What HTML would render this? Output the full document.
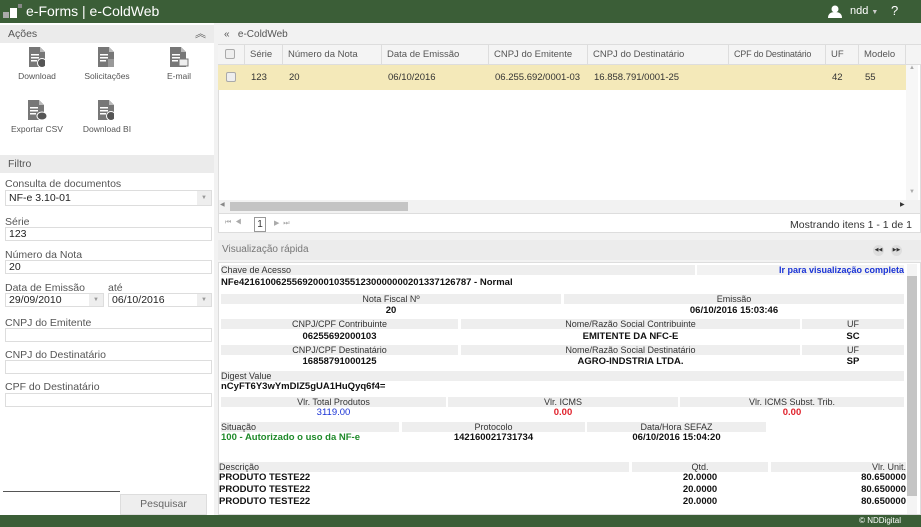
<!DOCTYPE html>
<html><head><meta charset="utf-8"><style>
*{box-sizing:border-box;margin:0;padding:0}
body{width:921px;height:527px;overflow:hidden;background:#f2f2f2;font-family:"Liberation Sans",sans-serif;font-size:10px;color:#333;position:relative}
.a{position:absolute}
.hdr{left:0;top:0;width:921px;height:23px;background:#3b5e37;color:#fff}
.ftr{left:0;top:515px;width:921px;height:12px;background:#3b5e37;color:#fff;font-size:8px}
.ph{background:#ebebeb;color:#555;font-size:10.5px;padding-left:8px;line-height:18px}
.lbl{font-size:10.5px;color:#555}
.inp{background:#fff;border:1px solid #ddd;height:14px;font-size:10.5px;color:#222;padding-left:3px;line-height:13px}
.dd{position:absolute;right:0;top:0;width:14px;height:100%;background:#eee;color:#999;font-size:6px;text-align:center;line-height:13px}
.ico{width:16px;height:20px}
.il{font-size:8.5px;color:#555;text-align:center;width:60px}
.gh{top:44px;height:21px;line-height:21px;border-right:1px solid #ddd;padding-left:5px;font-size:9.5px;color:#555;white-space:nowrap;overflow:hidden}
.gr{top:65px;height:25px;line-height:25px;padding-left:6px;font-size:9.5px;color:#333}
.cb{width:10px;height:10px;border:1px solid #aaa;border-radius:2px;background:#eee}
.b{background:#eee;height:10px;font-size:9px;line-height:10px;text-align:center;color:#333}
.v{font-size:9.5px;font-weight:bold;color:#111;text-align:center;line-height:11px}
.l{text-align:left}
</style></head><body>
<div class="a hdr">
  <div class="a" style="left:3px;top:12px;width:6px;height:6px;background:#aaa"></div>
  <div class="a" style="left:10px;top:8px;width:7px;height:10px;background:#fff"></div>
  <div class="a" style="left:18px;top:4px;width:4px;height:4px;background:#888"></div>
  <div class="a" style="left:26px;top:3px;font-size:14px;line-height:17px">e-Forms | e-ColdWeb</div>
  <svg class="a" style="left:828px;top:5px" width="14" height="13"><circle cx="7" cy="4" r="3.5" fill="#fff"/><path d="M0 13 Q0 7 7 7 Q14 7 14 13Z" fill="#fff"/></svg>
  <div class="a" style="left:850px;top:5px;font-size:11px">ndd <span style="font-size:7px;color:#ccc">▼</span></div>
  <div class="a" style="left:891px;top:3px;font-size:13px">?</div>
</div>
<!-- left -->
<div class="a" style="left:0;top:23px;width:214px;height:492px;background:#fff"></div>
<div class="a ph" style="left:0;top:25px;width:214px;height:18px">Ações<span class="a" style="right:8px;top:0;font-size:11px">︽</span></div>
<svg width="0" height="0" style="position:absolute"><defs><g id="doc"><path d="M0 0h11l5 5v15H0z" fill="#777"/><path d="M11 0v5h5" fill="#bbb"/><rect x="2" y="7" width="8" height="1.5" fill="#fff"/><rect x="2" y="10" width="8" height="1.5" fill="#fff"/><rect x="2" y="13" width="6" height="1.5" fill="#fff"/></g></defs></svg>
<svg class="a ico" style="left:29px;top:47px"><use href="#doc"/><circle cx="13" cy="16" r="4.5" fill="#555" stroke="#fff"/></svg>
<div class="a il" style="left:7px;top:71px">Download</div>
<svg class="a ico" style="left:98px;top:47px"><use href="#doc"/><rect x="10" y="12" width="6" height="8" fill="#999"/></svg>
<div class="a il" style="left:77px;top:71px">Solicitações</div>
<svg class="a ico" style="left:170px;top:47px;width:20px"><use href="#doc"/><rect x="9" y="12" width="9" height="7" fill="#eee" stroke="#777"/></svg>
<div class="a il" style="left:149px;top:71px">E-mail</div>
<svg class="a ico" style="left:28px;top:100px;width:20px"><use href="#doc"/><ellipse cx="14" cy="16" rx="5" ry="4" fill="#555" stroke="#fff"/></svg>
<div class="a il" style="left:7px;top:124px">Exportar CSV</div>
<svg class="a ico" style="left:98px;top:100px"><use href="#doc"/><circle cx="13" cy="16" r="4.5" fill="#555" stroke="#fff"/></svg>
<div class="a il" style="left:77px;top:124px">Download BI</div>
<div class="a ph" style="left:0;top:155px;width:214px;height:18px">Filtro</div>
<div class="a lbl" style="left:5px;top:178px">Consulta de documentos</div>
<div class="a inp" style="left:5px;top:190px;width:207px;height:16px;line-height:15px">NF-e 3.10-01<div class="dd" style="line-height:15px">▼</div></div>
<div class="a lbl" style="left:5px;top:216px">Série</div>
<div class="a inp" style="left:5px;top:227px;width:207px">123</div>
<div class="a lbl" style="left:5px;top:249px">Número da Nota</div>
<div class="a inp" style="left:5px;top:260px;width:207px">20</div>
<div class="a lbl" style="left:5px;top:282px">Data de Emissão</div>
<div class="a lbl" style="left:108px;top:282px">até</div>
<div class="a inp" style="left:5px;top:293px;width:99px">29/09/2010<div class="dd">▼</div></div>
<div class="a inp" style="left:108px;top:293px;width:104px">06/10/2016<div class="dd">▼</div></div>
<div class="a lbl" style="left:5px;top:317px">CNPJ do Emitente</div>
<div class="a inp" style="left:5px;top:328px;width:207px"></div>
<div class="a lbl" style="left:5px;top:349px">CNPJ do Destinatário</div>
<div class="a inp" style="left:5px;top:360px;width:207px"></div>
<div class="a lbl" style="left:5px;top:381px">CPF do Destinatário</div>
<div class="a inp" style="left:5px;top:393px;width:207px"></div>
<div class="a" style="left:3px;top:491px;width:117px;height:1px;background:#555"></div>
<div class="a" style="left:120px;top:494px;width:87px;height:21px;background:#eee;border:1px solid #ddd;color:#666;font-size:10.5px;text-align:center;line-height:19px">Pesquisar</div>
<!-- grid -->
<div class="a" style="left:218px;top:25px;width:703px;height:208px;background:#fff;border:1px solid #ddd"></div>
<div class="a" style="left:218px;top:25px;width:703px;height:19px;background:#f2f2f2;font-size:10px;color:#555;line-height:19px;padding-left:6px">«&nbsp;&nbsp; e-ColdWeb</div>
<div class="a" style="left:218px;top:44px;width:703px;height:21px;background:#f4f4f4;border-top:1px solid #ddd;border-bottom:1px solid #ddd"></div>
<div class="a gh" style="left:218px;width:27px"><div class="cb" style="margin-top:5px;margin-left:2px"></div></div>
<div class="a gh" style="left:245px;width:38px">Série</div>
<div class="a gh" style="left:283px;width:99px">Número da Nota</div>
<div class="a gh" style="left:382px;width:107px">Data de Emissão</div>
<div class="a gh" style="left:489px;width:99px">CNPJ do Emitente</div>
<div class="a gh" style="left:588px;width:141px">CNPJ do Destinatário</div>
<div class="a gh" style="left:729px;width:97px;font-size:9px;letter-spacing:-0.2px">CPF do Destinatário</div>
<div class="a gh" style="left:826px;width:33px">UF</div>
<div class="a gh" style="left:859px;width:47px">Modelo</div>
<div class="a" style="left:218px;top:65px;width:688px;height:25px;background:#f4e9b9"></div>
<div class="a gr" style="left:218px"><div class="cb" style="margin-top:7px;margin-left:2px"></div></div>
<div class="a gr" style="left:245px">123</div><div class="a gr" style="left:283px">20</div>
<div class="a gr" style="left:382px">06/10/2016</div><div class="a gr" style="left:489px">06.255.692/0001-03</div>
<div class="a gr" style="left:588px">16.858.791/0001-25</div><div class="a gr" style="left:826px">42</div><div class="a gr" style="left:859px">55</div>
<div class="a" style="left:906px;top:65px;width:12px;height:135px;background:#f7f7f7;color:#aaa;font-size:6px;text-align:center">▲<div style="margin-top:118px">▼</div></div>
<div class="a" style="left:219px;top:200px;width:701px;height:13px;background:#f2f2f2"></div>
<div class="a" style="left:230px;top:202px;width:178px;height:9px;background:#c4c4c4"></div>
<div class="a" style="left:220px;top:201px;font-size:6px;color:#888">◀</div>
<div class="a" style="left:900px;top:201px;font-size:6px;color:#333">▶</div>
<div class="a" style="left:219px;top:213px;width:701px;height:1px;background:#ddd"></div>
<div class="a" style="left:225px;top:219px;font-size:7px;color:#aaa">⏮&nbsp; ◀</div>
<div class="a" style="left:254px;top:217px;width:12px;height:15px;border:1px solid #999;font-size:10px;text-align:center;line-height:13px">1</div>
<div class="a" style="left:274px;top:219px;font-size:7px;color:#aaa">▶&nbsp; ⏭</div>
<div class="a" style="left:790px;top:219px;font-size:10.5px;color:#333">Mostrando itens 1 - 1 de 1</div>
<!-- quick view -->
<div class="a" style="left:218px;top:240px;width:703px;height:20px;background:#ececec;color:#777;font-size:10px;line-height:20px;padding-left:4px">Visualização rápida</div>
<div class="a" style="left:873px;top:245px;width:11px;height:11px;border-radius:6px;background:#ddd;font-size:5px;text-align:center;line-height:11px">◀◀</div>
<div class="a" style="left:891px;top:245px;width:11px;height:11px;border-radius:6px;background:#ddd;font-size:5px;text-align:center;line-height:11px">▶▶</div>
<div class="a" style="left:218px;top:262px;width:703px;height:253px;background:#fff;border:1px solid #ddd"></div>
<div class="a" style="left:907px;top:264px;width:10px;height:250px;background:#f4f4f4"><div style="margin-top:12px;height:220px;background:#c4c4c4"></div></div>

<div class="a b l" style="left:221px;top:265px;width:474px">Chave de Acesso</div>
<div class="a b" style="left:697px;top:265px;width:207px;text-align:right;color:#1a33d6;font-weight:bold;background:#f2f2f2">Ir para visualização completa</div>
<div class="a v l" style="left:221px;top:277px">NFe42161006255692000103551230000000201337126787 - Normal</div>
<div class="a b" style="left:221px;top:294px;width:340px">Nota Fiscal Nº</div>
<div class="a b" style="left:564px;top:294px;width:340px">Emissão</div>
<div class="a v" style="left:221px;top:305px;width:340px">20</div>
<div class="a v" style="left:564px;top:305px;width:340px">06/10/2016 15:03:46</div>
<div class="a b" style="left:221px;top:319px;width:237px">CNPJ/CPF Contribuinte</div>
<div class="a b" style="left:461px;top:319px;width:339px">Nome/Razão Social Contribuinte</div>
<div class="a b" style="left:802px;top:319px;width:102px">UF</div>
<div class="a v" style="left:221px;top:331px;width:237px">06255692000103</div>
<div class="a v" style="left:461px;top:331px;width:339px">EMITENTE DA NFC-E</div>
<div class="a v" style="left:802px;top:331px;width:102px">SC</div>
<div class="a b" style="left:221px;top:345px;width:237px">CNPJ/CPF Destinatário</div>
<div class="a b" style="left:461px;top:345px;width:339px">Nome/Razão Social Destinatário</div>
<div class="a b" style="left:802px;top:345px;width:102px">UF</div>
<div class="a v" style="left:221px;top:356px;width:237px">16858791000125</div>
<div class="a v" style="left:461px;top:356px;width:339px">AGRO-INDSTRIA LTDA.</div>
<div class="a v" style="left:802px;top:356px;width:102px">SP</div>
<div class="a b l" style="left:221px;top:371px;width:683px">Digest Value</div>
<div class="a v l" style="left:221px;top:381px">nCyFT6Y3wYmDIZ5gUA1HuQyq6f4=</div>
<div class="a b" style="left:221px;top:397px;width:225px">Vlr. Total Produtos</div>
<div class="a b" style="left:448px;top:397px;width:230px">Vlr. ICMS</div>
<div class="a b" style="left:680px;top:397px;width:224px">Vlr. ICMS Subst. Trib.</div>
<div class="a v" style="left:221px;top:407px;width:225px;color:#1a33d6;font-weight:normal">3119.00</div>
<div class="a v" style="left:448px;top:407px;width:230px;color:#e0202a">0.00</div>
<div class="a v" style="left:680px;top:407px;width:224px;color:#e0202a">0.00</div>
<div class="a b l" style="left:221px;top:422px;width:178px">Situação</div>
<div class="a b" style="left:402px;top:422px;width:183px">Protocolo</div>
<div class="a b" style="left:587px;top:422px;width:179px">Data/Hora SEFAZ</div>
<div class="a v l" style="left:221px;top:432px;color:#1f8a2a">100 - Autorizado o uso da NF-e</div>
<div class="a v" style="left:402px;top:432px;width:183px">142160021731734</div>
<div class="a v" style="left:587px;top:432px;width:179px">06/10/2016 15:04:20</div>
<div class="a b l" style="left:219px;top:462px;width:410px">Descrição</div>
<div class="a b" style="left:632px;top:462px;width:136px">Qtd.</div>
<div class="a b" style="left:771px;top:462px;width:135px;text-align:right">Vlr. Unit.</div>
<div class="a v l" style="left:219px;top:472px">PRODUTO TESTE22</div><div class="a v" style="left:632px;top:472px;width:136px">20.0000</div><div class="a v" style="left:771px;top:472px;width:135px;text-align:right">80.650000</div>
<div class="a v l" style="left:219px;top:484px">PRODUTO TESTE22</div><div class="a v" style="left:632px;top:484px;width:136px">20.0000</div><div class="a v" style="left:771px;top:484px;width:135px;text-align:right">80.650000</div>
<div class="a v l" style="left:219px;top:496px">PRODUTO TESTE22</div><div class="a v" style="left:632px;top:496px;width:136px">20.0000</div><div class="a v" style="left:771px;top:496px;width:135px;text-align:right">80.650000</div>
<div class="a ftr"><span class="a" style="right:20px;top:1px">© NDDigital</span></div>
</body></html>
